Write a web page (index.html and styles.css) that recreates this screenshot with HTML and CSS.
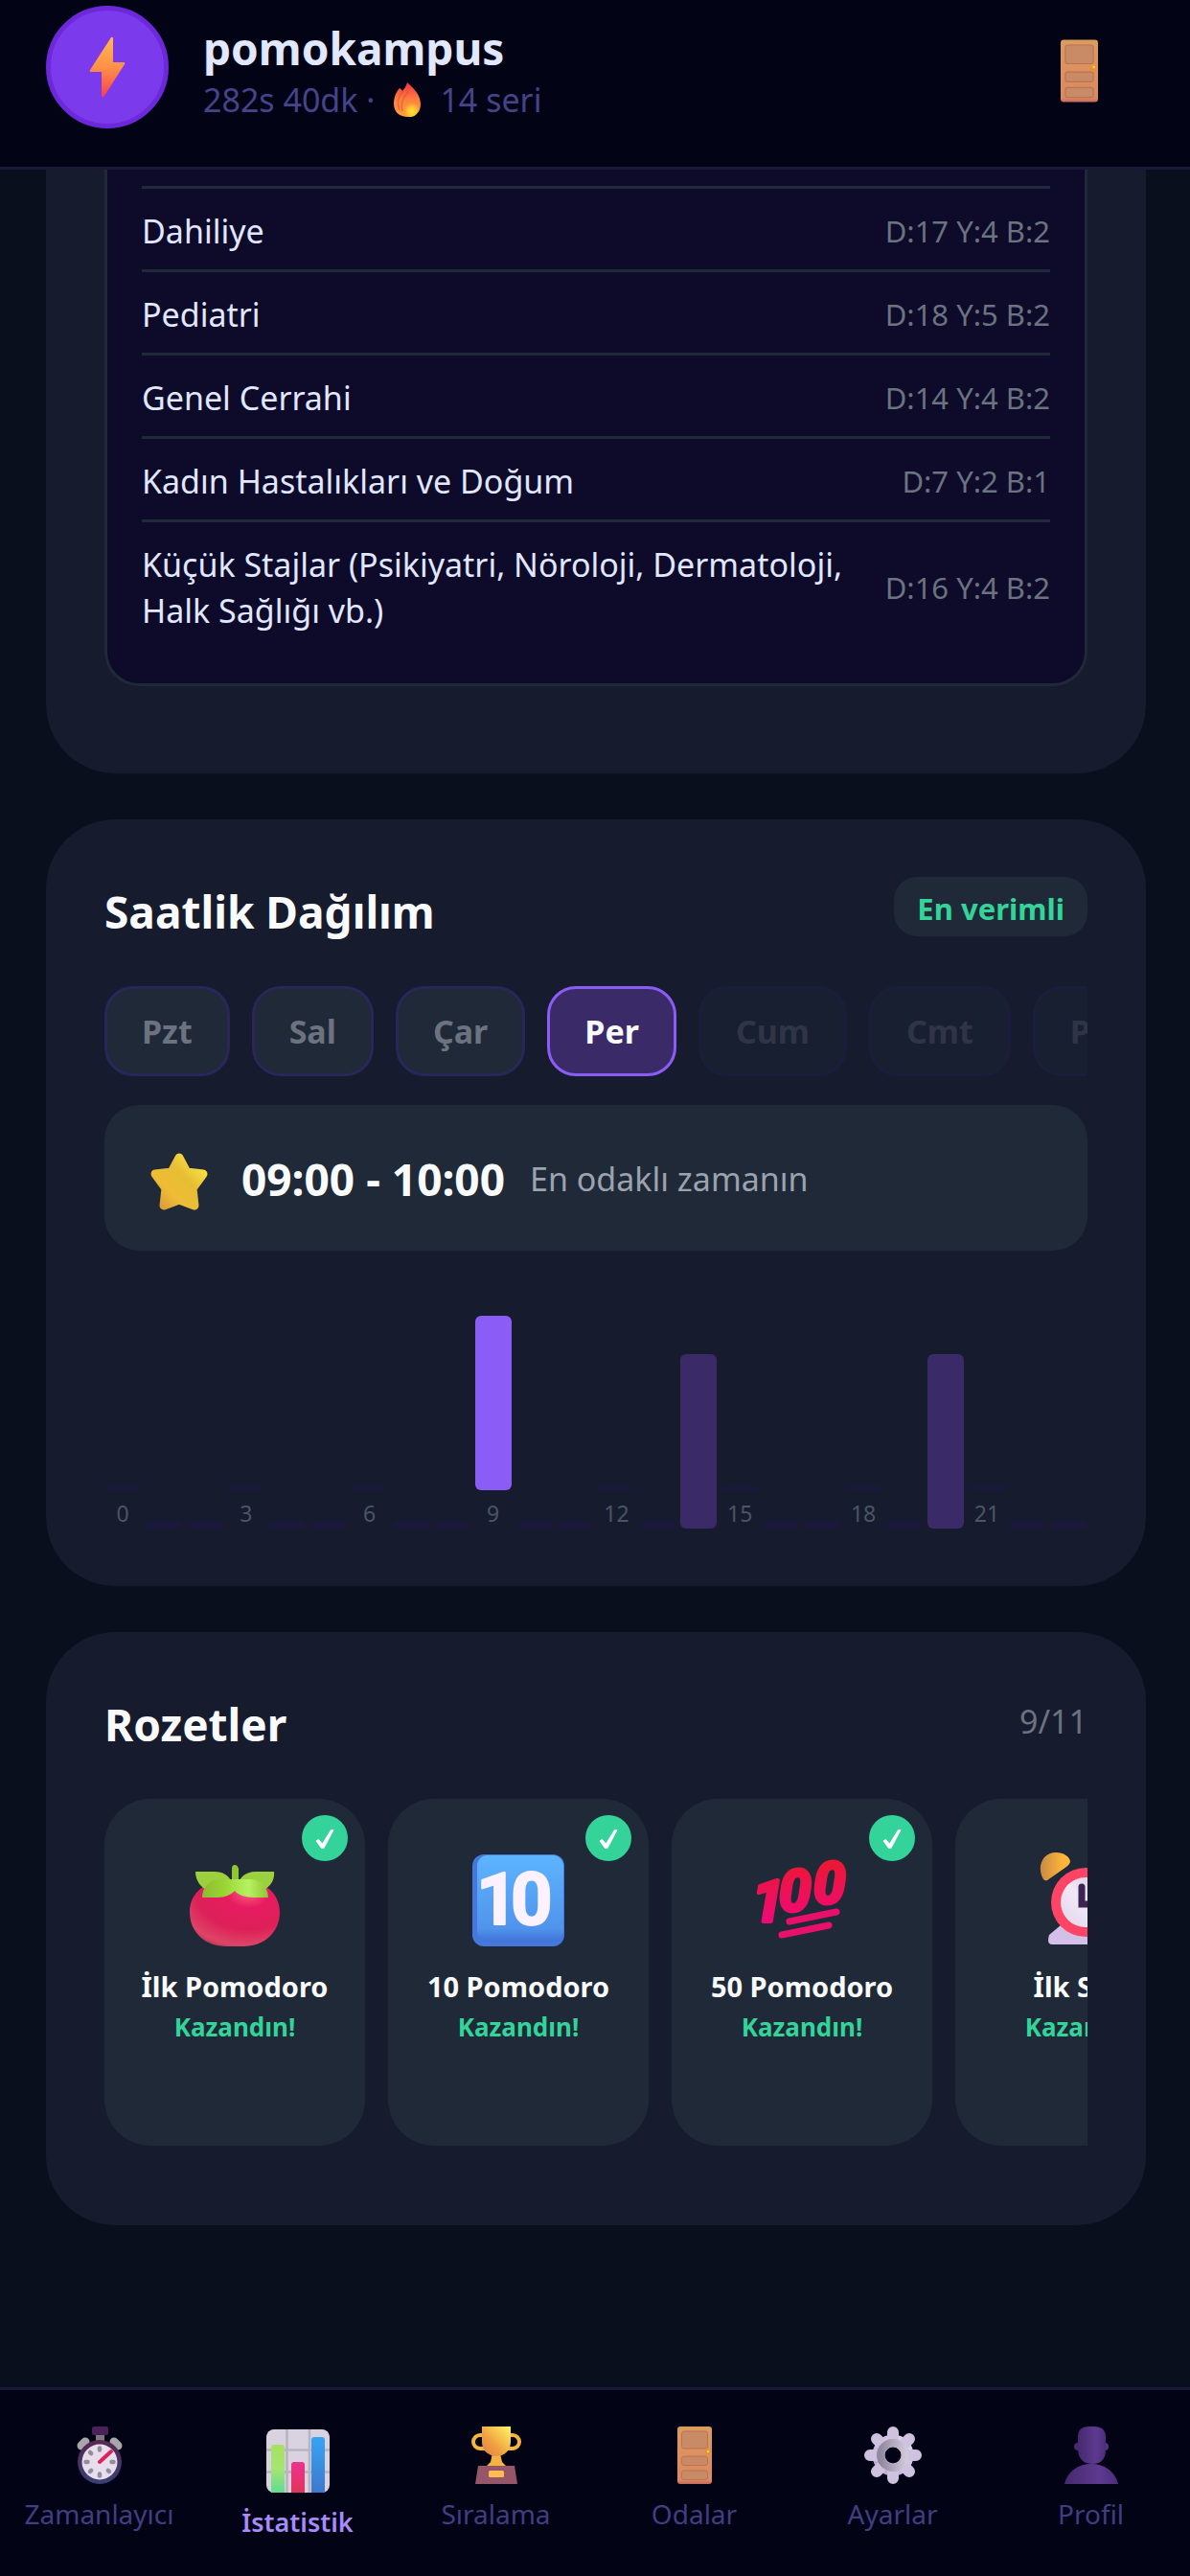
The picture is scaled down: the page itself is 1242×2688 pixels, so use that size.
FILE: index.html
```html
<!DOCTYPE html>
<html lang="tr">

<head>
    <meta charset="UTF-8">
    <meta name="viewport" content="width=device-width, initial-scale=1.0">
    <title>pomokampus</title>
    <link rel="stylesheet" href="styles.css">
</head>

<body>
    <!-- shared icon parts -->
    <svg class="defs" aria-hidden="true">
        <defs>
            <linearGradient id="gBolt" x1="0" y1="0" x2="0" y2="1">
                <stop offset="0" stop-color="#ffb950" />
                <stop offset=".5" stop-color="#ff9148" />
                <stop offset="1" stop-color="#f3404e" />
            </linearGradient>
            <linearGradient id="gFlame" x1="0" y1="0" x2="0" y2="1">
                <stop offset="0" stop-color="#f5323f" />
                <stop offset=".5" stop-color="#ff8040" />
                <stop offset="1" stop-color="#ffa03a" />
            </linearGradient>
            <radialGradient id="gFlameIn" cx=".6" cy=".75" r=".5">
                <stop offset="0" stop-color="#ffe02e" />
                <stop offset=".5" stop-color="#ffc234" />
                <stop offset="1" stop-color="#ff8a3c" stop-opacity="0" />
            </radialGradient>
            <linearGradient id="gDoor" x1="0" y1="0" x2="0" y2="1">
                <stop offset="0" stop-color="#da9c5e" />
                <stop offset=".5" stop-color="#dd9060" />
                <stop offset=".93" stop-color="#d98a62" />
                <stop offset="1" stop-color="#c8685c" />
            </linearGradient>
            <linearGradient id="gStar" x1="0" y1="1" x2="1" y2="0">
                <stop offset="0" stop-color="#d9963c" />
                <stop offset=".3" stop-color="#eebd34" />
                <stop offset=".6" stop-color="#e6bd35" />
                <stop offset="1" stop-color="#ffee45" />
            </linearGradient>
            <radialGradient id="gTomato" cx=".65" cy=".18" r=".95">
                <stop offset="0" stop-color="#ff5d80" />
                <stop offset=".25" stop-color="#e61c60" />
                <stop offset=".6" stop-color="#dd2058" />
                <stop offset=".85" stop-color="#dd4568" />
                <stop offset="1" stop-color="#b52a50" />
            </radialGradient>
            <linearGradient id="gLeaf" x1="0" y1="0" x2="1" y2="0">
                <stop offset="0" stop-color="#8dbb33" />
                <stop offset=".35" stop-color="#9bd633" />
                <stop offset=".7" stop-color="#b6f262" />
                <stop offset="1" stop-color="#91c436" />
            </linearGradient>
            <linearGradient id="gKey" x1="0" y1="0" x2="0" y2="1">
                <stop offset="0" stop-color="#5eb4ff" />
                <stop offset=".85" stop-color="#5094ec" />
                <stop offset="1" stop-color="#4272d8" />
            </linearGradient>
            <linearGradient id="gHundred" x1="0" y1="0" x2="0" y2="1">
                <stop offset="0" stop-color="#ec1a26" />
                <stop offset="1" stop-color="#ee0788" />
            </linearGradient>
            <linearGradient id="gBell" x1="0" y1="0" x2="1" y2="0">
                <stop offset="0" stop-color="#c88a44" />
                <stop offset=".25" stop-color="#ffb53a" />
                <stop offset="1" stop-color="#ffd048" />
            </linearGradient>
            <linearGradient id="gDial" x1="1" y1="0" x2="0" y2="1">
                <stop offset="0" stop-color="#cfc0dc" />
                <stop offset=".5" stop-color="#f1e8f7" />
                <stop offset="1" stop-color="#e2d6ea" />
            </linearGradient>
            <linearGradient id="gRim" x1="0" y1="0" x2="0" y2="1">
                <stop offset="0" stop-color="#572850" />
                <stop offset="1" stop-color="#393f77" />
            </linearGradient>
            <linearGradient id="gCup" x1="0" y1="1" x2="1" y2="0">
                <stop offset="0" stop-color="#e07a4a" />
                <stop offset=".4" stop-color="#f0a040" />
                <stop offset="1" stop-color="#fff568" />
            </linearGradient>
            <linearGradient id="gGreen" x1="0" y1="0" x2="0" y2="1">
                <stop offset="0" stop-color="#a8e060" />
                <stop offset=".5" stop-color="#a4e573" />
                <stop offset="1" stop-color="#5fdc92" />
            </linearGradient>
            <linearGradient id="gPink" x1="0" y1="0" x2="0" y2="1">
                <stop offset="0" stop-color="#ee3290" />
                <stop offset="1" stop-color="#e0355c" />
            </linearGradient>
            <linearGradient id="gBlue" x1="0" y1="0" x2="0" y2="1">
                <stop offset="0" stop-color="#36a4f4" />
                <stop offset="1" stop-color="#3e78cc" />
            </linearGradient>
            <linearGradient id="gGear" x1="0" y1="1" x2="1" y2="0">
                <stop offset="0" stop-color="#bba8d6" />
                <stop offset="1" stop-color="#e0d6ea" />
            </linearGradient>
            <linearGradient id="gHub" x1="0" y1="0" x2="1" y2="0">
                <stop offset="0" stop-color="#93899f" />
                <stop offset="1" stop-color="#cfc8d8" />
            </linearGradient>
            <linearGradient id="gUser" x1="0" y1="0" x2="1" y2="0">
                <stop offset="0" stop-color="#46296f" />
                <stop offset=".65" stop-color="#5d3a90" />
                <stop offset="1" stop-color="#4c2d7a" />
            </linearGradient>
            <symbol id="door" viewBox="0 0 36 60">
                <rect width="36" height="60" rx="3" fill="url(#gDoor)" />
                <g fill="#c98a66" stroke="#bb7352" stroke-width="1">
                    <rect x="4.500" y="5" width="27" height="18" rx="2.500" />
                    <rect x="4.500" y="31" width="27" height="9.500" rx="2.500" />
                    <rect x="4.500" y="46" width="27" height="9.500" rx="2.500" />
                </g>
                <circle cx="31.500" cy="27" r="2.600" fill="#f28c1c" />
                <circle cx="32" cy="26.300" r="1.300" fill="#ffd75a" />
            </symbol>
            <symbol id="check" viewBox="0 0 48 48">
                <path d="M15 27l2.500-1.500L21.500 30L30.500 15.500h2.500L23 34.500h-2.500z" fill="#fff" stroke="#fff" stroke-width="1" stroke-linejoin="round" />
            </symbol>
        </defs>
    </svg>

    <header class="topbar">
        <div class="avatar">
            <svg width="38" height="64" viewBox="0 0 38 64" aria-hidden="true">
                <path d="M23 1q2-1 2 1v25h11q2 0 1 2L16 62q-3 3-3-1V37H2q-2 0-1-2z" fill="url(#gBolt)" />
            </svg>
        </div>
        <div class="user">
            <h1 class="user-name">pomokampus</h1>
            <p class="user-stats">
                <span>282s 40dk ·</span>
                <svg class="flame" width="28" height="36" viewBox="0 0 28 36" aria-hidden="true">
                    <path d="M14 0c8 7 14 14 14 23 0 8-6 13-13 13C6 36 0 31 0 22 0 15 3 9 6 6c2 1 2 2 3 3 2-2 4-5 5-9z" fill="url(#gFlame)" />
                    <path d="M10 9C4 15 3 22 6 29M15 10c-7 7-8 13-6 20" stroke="#d9532f" stroke-width="1.500" fill="none" opacity=".6" />
                    <ellipse cx="17" cy="25" rx="10" ry="11" fill="url(#gFlameIn)" />
                </svg>
                <span>14 seri</span>
            </p>
        </div>
        <button class="room-btn" type="button" aria-label="Odalar">
            <svg width="39" height="66"><use href="#door" /></svg>
        </button>
    </header>

    <main class="content">
        <section class="card card-first">
            <div class="topics">
                <table class="topic-table">
                    <tr><td>Dahiliye</td><td class="score">D:17 Y:4 B:2</td></tr>
                    <tr><td>Pediatri</td><td class="score">D:18 Y:5 B:2</td></tr>
                    <tr><td>Genel Cerrahi</td><td class="score">D:14 Y:4 B:2</td></tr>
                    <tr><td>Kadın Hastalıkları ve Doğum</td><td class="score">D:7 Y:2 B:1</td></tr>
                    <tr><td>Küçük Stajlar (Psikiyatri, Nöroloji, Dermatoloji, Halk Sağlığı vb.)</td><td class="score">D:16 Y:4 B:2</td></tr>
                </table>
            </div>
        </section>

        <section class="card">
            <div class="card-head">
                <h2>Saatlik Dağılım</h2>
                <span class="tag">En verimli</span>
            </div>
            <div class="days">
                <button class="day" type="button">Pzt</button>
                <button class="day" type="button">Sal</button>
                <button class="day" type="button">Çar</button>
                <button class="day active" type="button">Per</button>
                <button class="day" type="button" disabled>Cum</button>
                <button class="day" type="button" disabled>Cmt</button>
                <button class="day" type="button" disabled>Paz</button>
            </div>
            <div class="best">
                <svg class="star" width="60" height="60" viewBox="0 0 60 60" aria-hidden="true">
                    <path d="M30 5L38 20L55 22L44 37L46 55L30 49L14 55L16 37L5 22L22 20Z" fill="url(#gStar)" stroke="url(#gStar)" stroke-width="9" stroke-linejoin="round" />
                </svg>
                <strong class="best-time">09:00 - 10:00</strong>
                <span class="best-note">En odaklı zamanın</span>
            </div>
            <div class="chart">
                <div class="col"><i class="bar small"></i><span>0</span></div>
                <div class="col"><i class="bar"></i></div>
                <div class="col"><i class="bar"></i></div>
                <div class="col"><i class="bar small"></i><span>3</span></div>
                <div class="col"><i class="bar"></i></div>
                <div class="col"><i class="bar"></i></div>
                <div class="col"><i class="bar small"></i><span>6</span></div>
                <div class="col"><i class="bar"></i></div>
                <div class="col"><i class="bar"></i></div>
                <div class="col"><i class="bar top" style="height: 182px"></i><span>9</span></div>
                <div class="col"><i class="bar"></i></div>
                <div class="col"><i class="bar"></i></div>
                <div class="col"><i class="bar small"></i><span>12</span></div>
                <div class="col"><i class="bar"></i></div>
                <div class="col"><i class="bar filled" style="height: 182px"></i></div>
                <div class="col"><i class="bar small"></i><span>15</span></div>
                <div class="col"><i class="bar"></i></div>
                <div class="col"><i class="bar"></i></div>
                <div class="col"><i class="bar small"></i><span>18</span></div>
                <div class="col"><i class="bar"></i></div>
                <div class="col"><i class="bar filled" style="height: 182px"></i></div>
                <div class="col"><i class="bar small"></i><span>21</span></div>
                <div class="col"><i class="bar"></i></div>
                <div class="col"><i class="bar"></i></div>
            </div>
        </section>

        <section class="card">
            <div class="card-head">
                <h2>Rozetler</h2>
                <span class="count">9/11</span>
            </div>
            <div class="badges">
                <div class="badge">
                    <svg class="check"><use href="#check" /></svg>
                    <svg class="badge-icon" viewBox="0 0 96 96" aria-hidden="true">
                        <path d="M48 28C22 24 1 38 1 60c0 22 17 36 38 36h18c21 0 38-14 38-36 0-22-21-36-47-32z" fill="url(#gTomato)" />
                        <path d="M7 18h20c9 0 14 4 17 9L20 38C12 34 7 27 7 18zM89 18H70c-9 0-14 4-17 9l24 11c8-4 13-11 12-20z" fill="#9cd03c" />
                        <path d="M45 28V15q0-4 3-4t4 4v14z" fill="#8fc731" />
                        <path d="M14 45c0-11 8-19 19-19h30c11 0 20 8 20 19H68c-10 0-17-3-20-7-4 4-10 7-18 7z" fill="url(#gLeaf)" />
                    </svg>
                    <h3>İlk Pomodoro</h3>
                    <p>Kazandın!</p>
                </div>
                <div class="badge">
                    <svg class="check"><use href="#check" /></svg>
                    <svg class="badge-icon" viewBox="0 0 96 96" aria-hidden="true">
                        <rect width="96" height="96" rx="12" fill="#4478dc" />
                        <rect x="5" y="1" width="90" height="90" rx="11" fill="url(#gKey)" />
                        <text class="key-text" x="4 40" y="73">10</text>
                    </svg>
                    <h3>10 Pomodoro</h3>
                    <p>Kazandın!</p>
                </div>
                <div class="badge">
                    <svg class="check"><use href="#check" /></svg>
                    <svg class="badge-icon" viewBox="0 0 96 96" aria-hidden="true">
                        <text class="hundred-text" x="-4 24 60" y="70 59 51">100</text>
                        <path d="M35 70L84 60M27 84L76 74" stroke="#e8106a" stroke-width="7" stroke-linecap="round" />
                    </svg>
                    <h3>50 Pomodoro</h3>
                    <p>Kazandın!</p>
                </div>
                <div class="badge">
                    <svg class="check"><use href="#check" /></svg>
                    <svg class="badge-icon" viewBox="0 0 96 96" aria-hidden="true">
                        <path d="M4 26C-4 12 4-2 17-2c8 0 14 4 15 9q0 3-4 6L8 27q-2 1-4-1zM92 26C100 12 92-2 79-2c-8 0-14 4-15 9q0 3 4 6l20 14q2 1 4-1z" fill="url(#gBell)" />
                        <path d="M22 74L10 84q-3 10 3 10h70q6 0 3-10L74 74z" fill="#d3bfe8" />
                        <circle cx="48" cy="50" r="36" fill="#ff4465" />
                        <circle cx="48" cy="50" r="26" fill="url(#gDial)" />
                        <path d="M44 34v18h14" fill="none" stroke="#3d2350" stroke-width="7" stroke-linecap="round" />
                    </svg>
                    <h3>İlk Saat</h3>
                    <p>Kazandın!</p>
                </div>
            </div>
        </section>
    </main>

    <nav class="tabs">
        <a class="tab" href="#">
            <svg width="60" height="60" viewBox="0 0 60 60" aria-hidden="true">
                <path d="M11 20l4-4M49 20l-4-4" stroke="#a9a5ad" stroke-width="9" stroke-linecap="round" />
                <rect x="26" y="7" width="9" height="8" fill="#7b7880" />
                <rect x="22" y="0" width="17" height="9" rx="2" fill="#4a2158" />
                <circle cx="30" cy="37" r="23" fill="url(#gRim)" />
                <circle cx="30" cy="37" r="18.500" fill="#e6deec" />
                <g stroke="#958d9c" stroke-width="4.500" stroke-linecap="round">
                    <path d="M30 22.500v2M30 49.500v2M15.500 37h2M42.500 37h2M20 27l1.200 1.200M20 47l1.200-1.200M40 47l-1.200-1.200" />
                </g>
                <path d="M30 37l12-11" stroke="#df2257" stroke-width="4" stroke-linecap="round" />
            </svg>
            <span>Zamanlayıcı</span>
        </a>
        <a class="tab active" href="#">
            <svg width="66" height="66" viewBox="0 0 66 66" aria-hidden="true">
                <rect width="66" height="66" rx="8" fill="#d9d2e0" />
                <path d="M21.500 0v66M45 0v66M0 21.500h66M0 44.500h66" stroke="#b9b2bf" stroke-width="2.500" />
                <path d="M5 66V19q0-3 3-3h8q3 0 3 3v47z" fill="url(#gGreen)" />
                <path d="M26 66V37q0-3 3-3h8q3 0 3 3v29z" fill="url(#gPink)" />
                <path d="M47 66V11q0-3 3-3h8q3 0 3 3v55z" fill="url(#gBlue)" />
            </svg>
            <span>İstatistik</span>
        </a>
        <a class="tab" href="#">
            <svg width="60" height="60" viewBox="0 0 60 60" aria-hidden="true">
                <path d="M16 9H13a6 6 0 0 0 0 14q3 0 5 0M44 9h3a6 6 0 0 1 0 14q-3 0-5 0" fill="none" stroke="#f4b63e" stroke-width="4" />
                <path d="M26 28h8l2 9 5 5H19l5-5z" fill="#f5b440" />
                <path d="M15 0h30v16c0 9-7 15-15 15S15 25 15 16z" fill="url(#gCup)" />
                <path d="M11 41h38l3 19H8z" fill="#95566a" />
                <rect x="22" y="46" width="16" height="7" rx="1.500" fill="#fcbd55" />
            </svg>
            <span>Sıralama</span>
        </a>
        <a class="tab" href="#">
            <svg width="36" height="60" aria-hidden="true"><use href="#door" /></svg>
            <span>Odalar</span>
        </a>
        <a class="tab" href="#">
            <svg width="60" height="60" viewBox="0 0 60 60" aria-hidden="true">
                <g stroke="url(#gGear)" fill="none">
                    <circle cx="30" cy="30" r="15" stroke-width="13" />
                </g>
                <g stroke="#cfc2e0" stroke-width="12" stroke-linecap="round">
                    <path d="M30 6v6M30 48v6M6 30h6M48 30h6M13 13l4 4M43 43l4 4M13 47l4-4M43 17l4-4" />
                </g>
                <circle cx="30" cy="30" r="13" fill="none" stroke="url(#gHub)" stroke-width="8" />
            </svg>
            <span>Ayarlar</span>
        </a>
        <a class="tab" href="#">
            <svg width="60" height="60" viewBox="0 0 60 60" aria-hidden="true">
                <circle cx="16" cy="21" r="4" fill="#46296f" />
                <circle cx="44" cy="21" r="4" fill="#55348a" />
                <path d="M16 11Q16 0 27 0h6q12 0 12 11v13q0 15-14 15T16 24z" fill="url(#gUser)" />
                <path d="M2 60C5 47 16 39 30 39s25 8 28 21z" fill="url(#gUser)" />
            </svg>
            <span>Profil</span>
        </a>
    </nav>
</body>

</html>
```
FILE: styles.css
```css
* {
    margin: 0;
    padding: 0;
    box-sizing: border-box;
}

body {
    display: flex;
    flex-direction: column;
    min-height: 100vh;
    background-color: #090f1d;
    color: #f9fafb;
    font-family: "Segoe UI", "Noto Sans", "Open Sans", sans-serif;
    font-size: 34px;
    line-height: 48px;
}

button {
    font: inherit;
    color: inherit;
    background: none;
    border: 0;
}

svg {
    display: block;
    flex-shrink: 0;
    overflow: visible;
}

.defs {
    position: absolute;
    width: 0;
    height: 0;
}

/* top bar */
.topbar {
    position: sticky;
    top: 0;
    z-index: 2;
    display: flex;
    gap: 36px;
    height: 177px;
    padding: 6px 48px 0;
    background-color: #020315;
    border-bottom: 3px solid #191839;
}

.avatar {
    display: flex;
    align-items: center;
    justify-content: center;
    width: 128px;
    height: 128px;
    border: 5px solid #6d28d9;
    border-radius: 50%;
    background-color: #7c3aed;
}

.user {
    flex: 1;
    padding-top: 17px;
}

.user-name {
    font-size: 46px;
    line-height: 54px;
    color: #e0e7ff;
}

.user-stats {
    display: flex;
    align-items: center;
    gap: 20px;
    padding-top: 3px;
    color: #45438a;
}

.room-btn {
    align-self: flex-start;
    padding: 35px 48px 0 0;
}

/* cards */
.content {
    display: flex;
    flex-direction: column;
    gap: 48px;
    padding: 0 46px 48px 48px;
}

.card {
    padding: 60px 61px;
    border-radius: 72px;
    background-color: #161b2d;
}

.card-first {
    padding-top: 0;
    padding-bottom: 91px;
    border-radius: 0 0 72px 72px;
}

.card-head {
    display: flex;
    justify-content: space-between;
    align-items: flex-start;
    margin-bottom: 42px;
}

.card-head h2 {
    font-size: 46px;
    line-height: 72px;
}

.topics {
    padding: 17px 36px 36px;
    border: 3px solid #1f2937;
    border-top: 0;
    border-radius: 0 0 36px 36px;
    background-color: #0d0b29;
}

.topic-table {
    width: 100%;
    border-spacing: 0;
    color: #e0e7ff;
}

.topic-table td {
    padding: 20px 0 16px;
    border-top: 3px solid #1f2937;
}

.topic-table .score {
    padding-left: 36px;
    font-size: 31px;
    text-align: right;
    white-space: nowrap;
    color: #6b7280;
}

.tag {
    padding: 9px 24px 5px;
    border-radius: 24px;
    background-color: #1f2937;
    font-size: 31px;
    font-weight: bold;
    color: #34d399;
}

.count {
    padding-top: 9px;
    color: #6b7280;
}

/* day picker */
.days {
    display: flex;
    gap: 23px;
    overflow: hidden;
}

.day {
    flex-shrink: 0;
    padding: 20px 36px;
    border: 3px solid #29265a;
    border-radius: 30px;
    background-color: #1f2937;
    font-weight: bold;
    color: #6b7280;
}

.day.active {
    border-color: #8b5cf6;
    background-color: #3b2a68;
    color: #f9fafb;
}

.day:disabled {
    opacity: .3;
}

.best {
    display: flex;
    align-items: center;
    height: 152px;
    margin-top: 30px;
    padding: 2px 48px 0;
    border-radius: 36px;
    background-color: #1f2937;
}

.star {
    margin-top: 6px;
}

.best-time {
    margin-left: 35px;
    font-size: 46px;
}

.best-note {
    margin-left: 26px;
    color: #9ca3af;
}

/* hourly chart */
.chart {
    display: flex;
    align-items: flex-end;
    gap: 5px;
    height: 242px;
    margin-top: 48px;
}

.col {
    flex: 1 1 0;
    min-width: 0;
}

.bar {
    display: block;
    height: 8px;
    border-radius: 6px;
    background-color: #1a193b;
}

.bar.small {
    height: 5px;
}

.col span {
    display: block;
    padding-top: 8px;
    font-size: 23px;
    line-height: 32px;
    text-align: center;
    color: #4b5563;
}

.bar.top {
    background-color: #8b5cf6;
}

.bar.filled {
    background-color: #3b2a68;
}

/* badges */
.badges {
    display: flex;
    gap: 24px;
    padding-bottom: 23px;
    overflow: hidden;
}

.badge {
    position: relative;
    flex: 0 0 272px;
    min-height: 362px;
    padding-top: 58px;
    border-radius: 48px;
    background-color: #1f2937;
    text-align: center;
}

.check {
    position: absolute;
    top: 17px;
    right: 18px;
    width: 48px;
    height: 48px;
    border-radius: 50%;
    background-color: #34d399;
}

.badge-icon {
    width: 96px;
    height: 96px;
    margin: 0 auto 22px;
}

.badge h3 {
    font-size: 29px;
    line-height: 40px;
}

.badge p {
    padding-top: 6px;
    font-size: 26px;
    line-height: 32px;
    font-weight: bold;
    color: #34d399;
}

.key-text {
    font-family: Roboto, sans-serif;
    font-size: 76px;
    font-weight: bold;
    fill: #fbf1ff;
    stroke: #fbf1ff;
    stroke-width: 2;
    stroke-linejoin: round;
}

.hundred-text {
    font-family: Roboto, sans-serif;
    font-size: 60px;
    font-weight: bold;
    font-style: italic;
    fill: url(#gHundred);
    stroke: url(#gHundred);
    stroke-width: 4;
    stroke-linejoin: round;
}

/* bottom tabs */
.tabs {
    position: sticky;
    bottom: 0;
    z-index: 2;
    display: flex;
    height: 197px;
    margin-top: auto;
    padding-top: 38px;
    border-top: 3px solid #191839;
    background-color: #020315;
}

.tab {
    display: flex;
    flex: 1 1 0;
    flex-direction: column;
    align-items: center;
    gap: 12px;
    font-size: 28px;
    line-height: 38px;
    color: #403e82;
    text-decoration: none;
}

.tab.active {
    padding-top: 3px;
    font-size: 27px;
    font-weight: 600;
    color: #a78bfa;
}
```
